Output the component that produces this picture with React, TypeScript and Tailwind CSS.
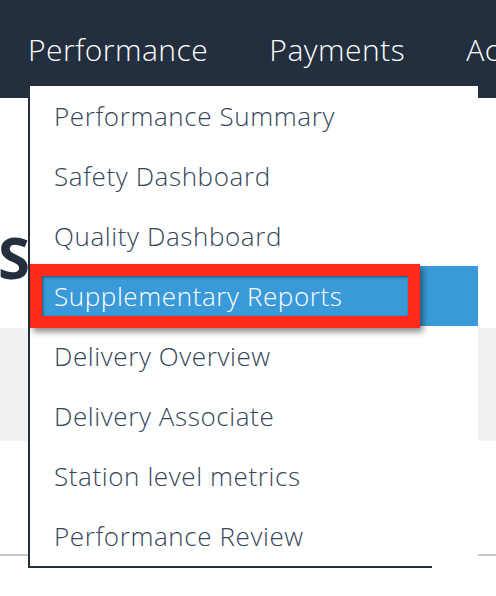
import React from 'react';

const menuItems = [
  'Performance Summary',
  'Safety Dashboard',
  'Quality Dashboard',
  'Supplementary Reports',
  'Delivery Overview',
  'Delivery Associate',
  'Station level metrics',
  'Performance Review',
];

const App = () => {
  const active = 3;

  return (
    <div className="relative w-[496px] h-[596px] overflow-hidden bg-white font-['Open_Sans',sans-serif]">
      {/* top nav */}
      <nav className="h-[98px] bg-[#232f3e] flex items-center gap-[61px] pl-[28px] text-white text-[30px] tracking-[0.5px] font-light whitespace-nowrap">
        <span>Performance</span>
        <span>Payments</span>
        <span>Account</span>
      </nav>

      {/* page content behind the menu */}
      <div className="flex flex-col">
        <h1 className="mt-[130px] h-[100px] text-[58px] leading-none font-bold text-[#232f3e] whitespace-nowrap -ml-[2px]">
          Supplementary
        </h1>
        <div className="h-[113px] bg-[#f0f1f2]" />
        <div className="mt-[113px] h-[2px] bg-[#c6c6c6]" />
      </div>

      {/* dropdown */}
      <div className="absolute left-[28px] top-[86px] w-[450px] bg-white border-l-2 border-[#232f3e]">
        <ul className="flex flex-col">
          {menuItems.map((item, i) => (
            <li
              key={item}
              className={`h-[60px] flex items-center pl-[24px] text-[26px] tracking-[0.6px] font-light whitespace-nowrap ${
                i === active ? 'bg-[#3a9ad9] text-white' : 'text-[#34465a]'
              }`}
            >
              {item}
            </li>
          ))}
        </ul>
        <div className="w-[404px] h-[2px] -ml-[2px] bg-[#232f3e]" />

        {/* annotation box */}
        <div className="absolute left-0 top-[178px] w-[390px] h-[64px] border-[12px] border-[#ff2a1a] shadow-[3px_4px_6px_rgba(0,0,0,0.45),inset_1px_1px_3px_rgba(0,0,0,0.5)]" />
      </div>
    </div>
  );
};

export default App;
